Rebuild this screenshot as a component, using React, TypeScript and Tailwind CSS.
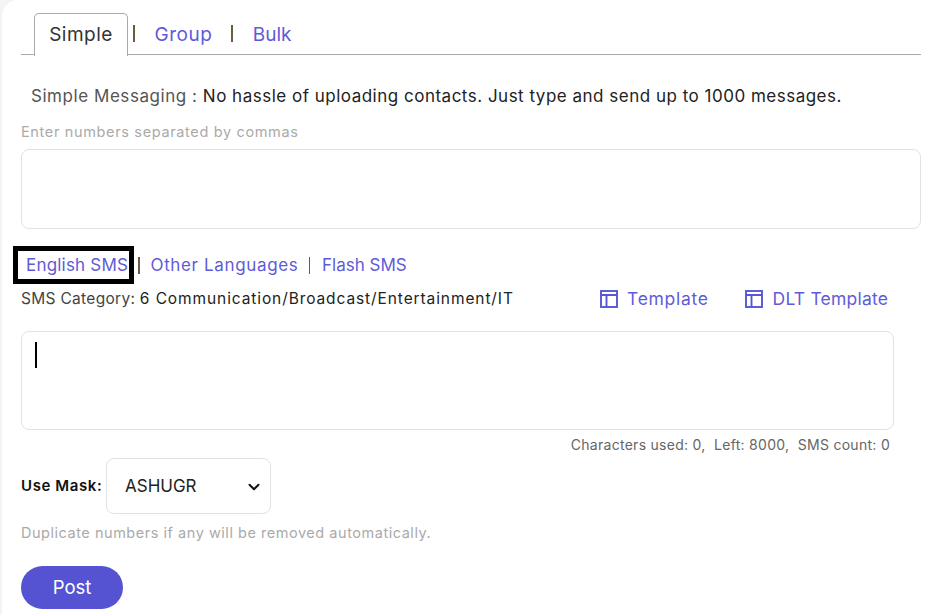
import React from "react";
import { ChevronDown } from "lucide-react";

const font = "font-['Inter','Liberation_Sans',sans-serif]";

const TemplateIcon = () => (
  <svg width="18" height="18" viewBox="0 0 18 18" fill="none" stroke="#5856d6" strokeWidth="1.9">
    <rect x="1" y="1" width="16" height="16" />
    <path d="M1 5H17M6.5 5V17" />
  </svg>
);

const Divider = ({ className }: { className: string }) => (
  <span className={`h-[17px] w-[1.5px] ${className}`} />
);

const App = () => {
  return (
    <div className={`h-[615px] w-[940px] overflow-hidden bg-[#f4f4f4] pl-[2px] ${font}`}>
      <div className="h-full rounded-tl-[16px] bg-white pl-[19px] pr-[19px] pt-[13px]">
        {/* tabs */}
        <div className="flex h-[42px] items-center border-b border-[#aaa] pl-[13px] text-[19px] tracking-[0.5px]">
          <div className="-mb-[1px] flex h-[43px] w-[94px] items-center justify-center rounded-t-[5px] border border-b-0 border-[#aaa] bg-white pt-[2px] text-[#333]">
            Simple
          </div>
          <Divider className="ml-[5px] bg-[#6b5b45]" />
          <a className="ml-[20px] pt-[3px] text-[#5f5bd8]">Group</a>
          <Divider className="ml-[19px] bg-[#6b5b45]" />
          <a className="ml-[20px] pt-[3px] tracking-[0px] text-[#5f5bd8]">Bulk</a>
        </div>

        <p className="mt-[30px] whitespace-nowrap pl-[10px] text-[17px] leading-[22px] tracking-[0.5px] text-[#222]">
          <span className="tracking-[0.55px] text-[#555]">Simple Messaging : </span>
          No hassle of uploading contacts. Just type and send up to 1000 messages.
        </p>

        <p className="mt-[16px] text-[14.5px] leading-[18px] tracking-[0.65px] text-[#aaa]">Enter numbers separated by commas</p>

        <div className="mt-[8px] h-[80px] rounded-[8px] border border-[#e2e2e2]" />

        {/* message type links */}
        <div className="-ml-[8px] mt-[17px] flex h-[38px] items-center text-[17px] text-[#5f5bd8]">
          <a className="flex h-[38px] w-[121px] items-center whitespace-nowrap border-[5px] border-black pl-[8px] pt-[2px] tracking-[0.2px]">English SMS</a>
          <Divider className="ml-[4px] bg-[#6b5b45]" />
          <a className="ml-[11px] pt-[2px] tracking-[0.65px]">Other Languages</a>
          <Divider className="ml-[10px] bg-[#6b5b45]" />
          <a className="ml-[12px] pt-[2px]">Flash SMS</a>
        </div>

        <div className="mt-[3px] flex h-[24px] items-center text-[15.5px] text-[#222]">
          <span className="w-[579px] whitespace-nowrap tracking-[0.9px]">
            <span className="tracking-[0.3px] text-[#444]">SMS Category: </span>6 Communication/Broadcast/Entertainment/IT
          </span>
          <a className="flex items-center gap-[9px] text-[17.5px] tracking-[0.7px] text-[#5f5bd8]">
            <TemplateIcon />
            Template
          </a>
          <a className="ml-[36px] flex items-center gap-[10px] whitespace-nowrap text-[17.5px] tracking-[0.2px] text-[#5f5bd8]">
            <TemplateIcon />
            DLT Template
          </a>
        </div>

        <div className="mt-[20px] h-[99px] w-[873px] rounded-[8px] border border-[#e2e2e2] pl-[13px] pt-[10px]">
          <div className="h-[26px] w-[2px] bg-black" />
        </div>

        <p className="mt-[6px] w-[869px] whitespace-pre text-right text-[14px] leading-[18px] tracking-[0.28px] text-[#666]">
          {"Characters used: 0,  Left: 8000,  SMS count: 0"}
        </p>

        <div className="mt-[4px] flex items-center">
          <label className="w-[85px] whitespace-nowrap pt-[1px] text-[15px] font-semibold tracking-[0.6px] text-[#111]">Use Mask:</label>
          <div className="flex h-[56px] w-[165px] items-center justify-between rounded-[8px] border border-[#e2e2e2] pl-[18px] pr-[7px] pt-[1px] text-[17px] text-[#222]">
            ASHUGR
            <ChevronDown size={18} strokeWidth={2.6} color="#111" />
          </div>
        </div>

        <p className="mt-[10px] whitespace-nowrap text-[14.5px] leading-[18px] tracking-[0.53px] text-[#aaa]">Duplicate numbers if any will be removed automatically.</p>

        <button className="mt-[24px] h-[43px] w-[102px] rounded-full bg-[#5553d2] text-[18.5px] text-white">Post</button>
      </div>
    </div>
  );
};

export default App;
